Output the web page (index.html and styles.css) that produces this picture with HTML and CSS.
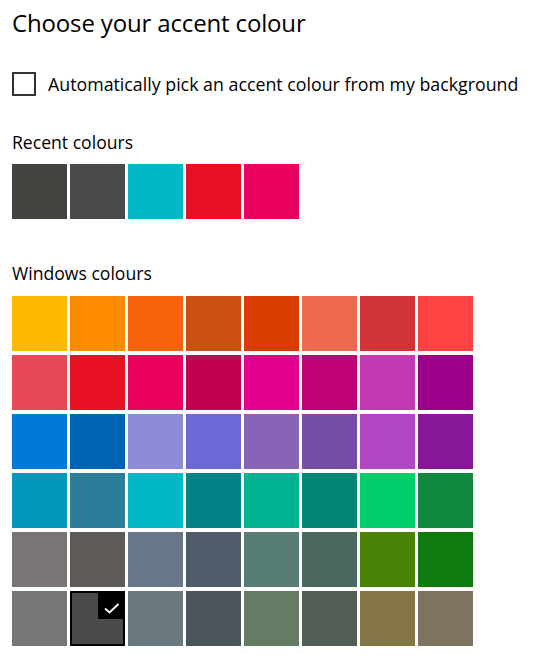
FILE: index.html
```html
<!DOCTYPE html>
<html lang="en">
<head>
    <meta charset="UTF-8">
    <title>Colours</title>
    <link rel="stylesheet" href="styles.css">
</head>
<body>
    <h1 class="title">Choose your accent colour</h1>

    <label class="auto-pick">
        <span class="checkbox"></span>
        <span>Automatically pick an accent colour from my background</span>
    </label>

    <h2 class="section-label recent-label">Recent colours</h2>
    <div class="recent">
        <div class="swatch" style="background:#45433f"></div>
        <div class="swatch" style="background:#4c4a48"></div>
        <div class="swatch" style="background:#00b7c3"></div>
        <div class="swatch" style="background:#e81123"></div>
        <div class="swatch" style="background:#ea005e"></div>
    </div>

    <h2 class="section-label windows-label">Windows colours</h2>
    <div class="palette">
        <div class="swatch" style="background:#ffb900"></div>
        <div class="swatch" style="background:#ff8c00"></div>
        <div class="swatch" style="background:#f7630c"></div>
        <div class="swatch" style="background:#ca5010"></div>
        <div class="swatch" style="background:#da3b01"></div>
        <div class="swatch" style="background:#ef6950"></div>
        <div class="swatch" style="background:#d13438"></div>
        <div class="swatch" style="background:#ff4343"></div>

        <div class="swatch" style="background:#e74856"></div>
        <div class="swatch" style="background:#e81123"></div>
        <div class="swatch" style="background:#ea005e"></div>
        <div class="swatch" style="background:#c30052"></div>
        <div class="swatch" style="background:#e3008c"></div>
        <div class="swatch" style="background:#bf0077"></div>
        <div class="swatch" style="background:#c239b3"></div>
        <div class="swatch" style="background:#9a0089"></div>

        <div class="swatch" style="background:#0078d7"></div>
        <div class="swatch" style="background:#0063b1"></div>
        <div class="swatch" style="background:#8e8cd8"></div>
        <div class="swatch" style="background:#6b69d6"></div>
        <div class="swatch" style="background:#8764b8"></div>
        <div class="swatch" style="background:#744da9"></div>
        <div class="swatch" style="background:#b146c2"></div>
        <div class="swatch" style="background:#881798"></div>

        <div class="swatch" style="background:#0099bc"></div>
        <div class="swatch" style="background:#2d7d9a"></div>
        <div class="swatch" style="background:#00b7c3"></div>
        <div class="swatch" style="background:#038387"></div>
        <div class="swatch" style="background:#00b294"></div>
        <div class="swatch" style="background:#018574"></div>
        <div class="swatch" style="background:#00cc6a"></div>
        <div class="swatch" style="background:#10893e"></div>

        <div class="swatch" style="background:#7a7574"></div>
        <div class="swatch" style="background:#5d5a58"></div>
        <div class="swatch" style="background:#68768a"></div>
        <div class="swatch" style="background:#515c6b"></div>
        <div class="swatch" style="background:#567c73"></div>
        <div class="swatch" style="background:#486860"></div>
        <div class="swatch" style="background:#498205"></div>
        <div class="swatch" style="background:#107c10"></div>

        <div class="swatch" style="background:#767676"></div>
        <div class="swatch selected" style="background:#4c4a48">
            <span class="tick">
                <svg width="24" height="24" viewBox="0 0 24 24">
                    <path d="M6 14.5 L10.5 18.5 L19.5 10" fill="none" stroke="#fff" stroke-width="1.8"/>
                </svg>
            </span>
        </div>
        <div class="swatch" style="background:#69797e"></div>
        <div class="swatch" style="background:#4a5459"></div>
        <div class="swatch" style="background:#647c64"></div>
        <div class="swatch" style="background:#525e54"></div>
        <div class="swatch" style="background:#847545"></div>
        <div class="swatch" style="background:#7e735f"></div>
    </div>
</body>
</html>
```

FILE: styles.css
```css
body {
    margin: 0;
    padding: 6px 12px 0;
    font-family: "Open Sans", "Noto Sans", sans-serif;
    color: #000;
    background: #fff;
}

.title {
    margin: 0;
    font-size: 24px;
    font-weight: 400;
    line-height: 34px;
    letter-spacing: -0.15px;
}

.auto-pick {
    display: flex;
    align-items: center;
    gap: 12px;
    margin-top: 32px;
    font-size: 17.8px;
}

.checkbox {
    width: 20px;
    height: 20px;
    border: 2px solid #333;
}

.section-label {
    margin: 0;
    font-size: 17.6px;
    font-weight: 400;
    line-height: 24px;
}

.recent-label {
    margin-top: 34px;
}

.windows-label {
    margin-top: 42px;
}

.recent {
    display: flex;
    gap: 3px;
    margin-top: 10px;
}

.palette {
    display: grid;
    grid-template-columns: repeat(8, 55px);
    grid-auto-rows: 55px;
    column-gap: 3px;
    row-gap: 4px;
    margin-top: 11px;
}

.swatch {
    width: 55px;
    height: 55px;
    box-sizing: border-box;
    position: relative;
}

.swatch.selected {
    border: 2px solid #000;
}

.tick {
    position: absolute;
    top: 0;
    right: 0;
    width: 25px;
    height: 26px;
    background: #000;
    display: flex;
    align-items: center;
    justify-content: center;
}
```
